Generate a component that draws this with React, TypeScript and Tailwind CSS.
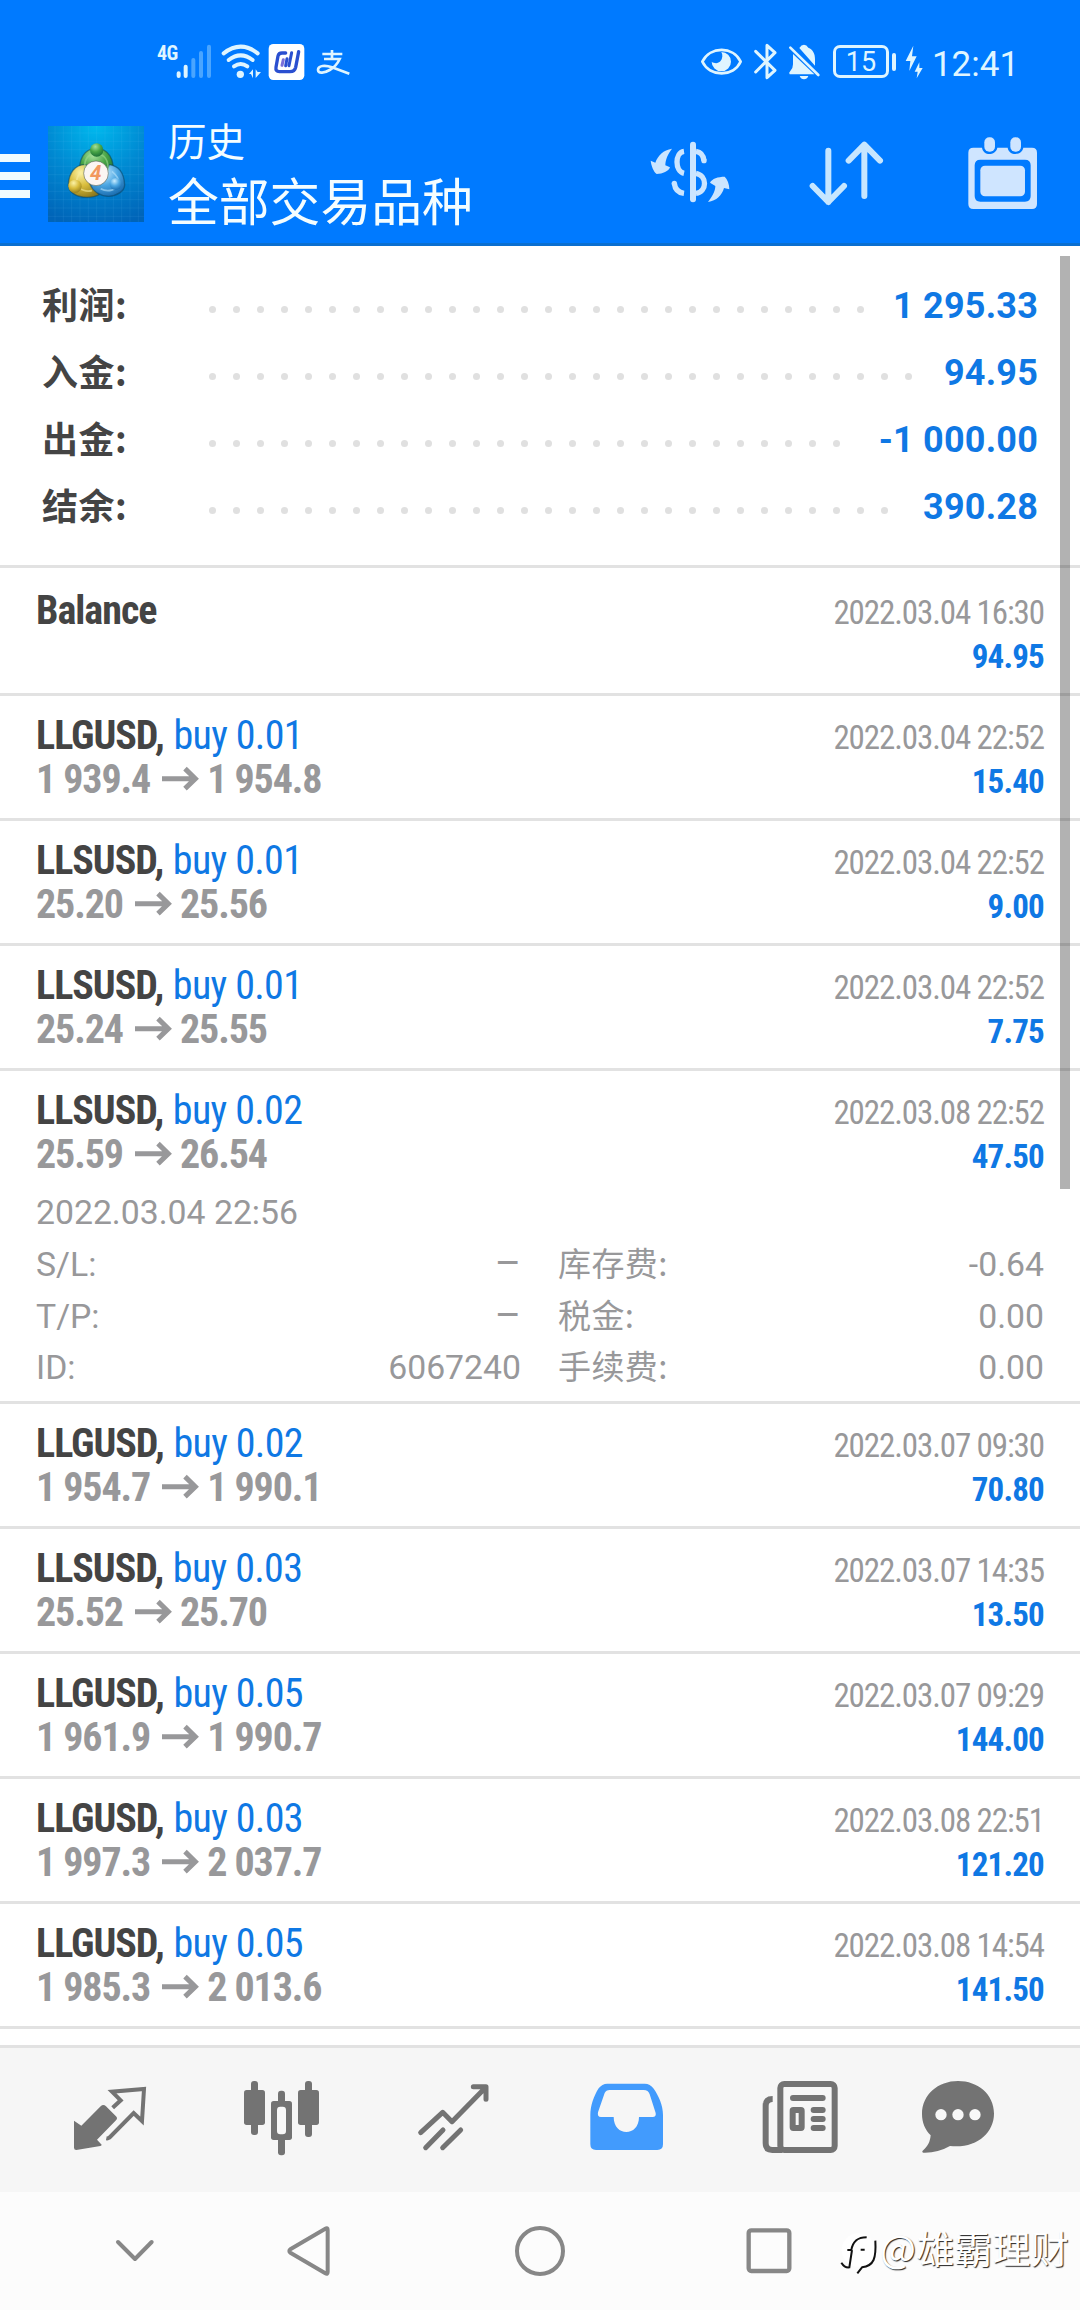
import React from 'react';

type IconProps = { box: string; children: React.ReactNode; className?: string };

// Icons are drawn on a grid of three units per pixel.
function Icon({ box, children, className = '' }: IconProps) {
  const [, , w, h] = box.split(' ').map(Number);
  return (
    <svg
      viewBox={box}
      width={w / 3}
      height={h / 3}
      fill="none"
      className={'shrink-0 overflow-visible ' + className}
    >
      {children}
    </svg>
  );
}

const round = { strokeLinecap: 'round', strokeLinejoin: 'round' } as const;

function StatusBar() {
  return (
    <div className="flex h-[110px] items-start pt-[30px] text-[#dff5ff]">
      <div className="mt-[14px] ml-[157px] w-[19px] text-[20px] leading-[18px] font-bold tracking-[-0.5px] [font-stretch:75%]">4G</div>
      <Icon box="135 0 111 180" className="-ml-px">
        <g {...round} strokeWidth="12">
          <path d="M146 130v8M167 110v28" stroke="#dff5ff" />
          <path d="M190 90v48M213 69v69M237 50v88" stroke="#4aa5ff" />
        </g>
      </Icon>
      <Icon box="264 0 140 180" className="ml-[6px]">
        <g stroke="#dff5ff" strokeWidth="12" strokeLinecap="round">
          <path d="M281 70Q332 30 383 70" />
          <path d="M296 90Q332 62 368 90" />
          <path d="M312 109Q332 95 352 109" />
        </g>
        <circle cx="331" cy="133" r="11" fill="#dff5ff" />
        <path d="M369 118l-12 14h6l6 13zM377 118v26l16-18h-10z" fill="#dff5ff" />
      </Icon>
      <Icon box="410 0 115 180" className="ml-[2px]">
        <rect x="415" y="42" width="107" height="108" rx="14" fill="#fff" />
        <g stroke="#2a4fd0" {...round}>
          <path d="M466 69h-11q-10 0-12 9l-6 34q-2 13 10 13h32q14 0 17-13l9-47" strokeWidth="10" />
          <path d="M459 89l-4 17" strokeWidth="9" stroke="#7a6fd8" />
          <path d="M484 68l-8 39M470 86l-4 21" strokeWidth="9" />
        </g>
      </Icon>
      <Icon box="550 0 115 180" className="ml-[9px]">
        <g stroke="#dff5ff" strokeWidth="8">
          <path d="M575 72h60M604 60v24M580 87h47q-10 22-30 33c-15 9-34 12-35 0c0-14 22-15 42-8l52 19" />
        </g>
      </Icon>

      <Icon box="60 0 130 180" className="ml-[348px]">
        <path d="M67 95C90 48 160 48 182 95C160 142 90 142 67 95z" stroke="#dff5ff" strokeWidth="8" strokeLinejoin="round" />
        <path d="M124 66a29 29 0 1 1-29 29c8 6 20 6 26-1 7-8 8-19 3-28z" fill="#dff5ff" />
      </Icon>
      <Icon box="215 0 80 180" className="ml-[8px]">
        <path d="M226 64l58 57-24 22V46l24 22-58 58" stroke="#dff5ff" strokeWidth="9" {...round} />
      </Icon>
      <Icon box="320 0 110 180" className="ml-[8px]">
        <path d="M360 54q6-10 14-10t13 9c14 6 20 18 20 34v20zM341 72l64 61H331q-4-4 2-10 8-7 8-20z" fill="#dff5ff" />
        <path d="M361 138h26q-4 10-13 10t-13-10z" fill="#dff5ff" />
        <path d="M333 53l84 82" stroke="#dff5ff" strokeWidth="8" strokeLinecap="round" />
      </Icon>
      <div className="mt-[15px] ml-[10px] flex h-[33px] w-[56px] items-center justify-center rounded-[7px] border-[3px] border-[#dff5ff] text-[27px] leading-[30px]">
        15
      </div>
      <div className="mt-[23px] ml-[3px] h-[18px] w-[4px] rounded-full bg-[#dff5ff]" />
      <Icon box="670 0 60 180" className="ml-[8px]">
        <path d="M698 47l-23 46h14l-3 30 22-44h-14zM716 97l-14 28h9l-3 20 18-31h-10z" fill="#dff5ff" />
      </Icon>
      <div className="mt-[15px] ml-[8px] text-[35px] leading-[40px]">12:41</div>
    </div>
  );
}

function Logo() {
  const grid = [165, 190, 215, 240, 265, 290, 315, 340, 365, 390, 415];
  return (
    <Icon box="144 48 288 288" className="mt-[16px] ml-[18px]">
      <defs>
        <radialGradient id="sky" cx=".5" cy="0" r="1.05">
          <stop offset="0" stopColor="#00b9ee" />
          <stop offset=".5" stopColor="#0089d2" />
          <stop offset="1" stopColor="#0064b8" />
        </radialGradient>
        <radialGradient id="green" cx=".4" cy=".25" r=".8">
          <stop offset="0" stopColor="#a6e09a" />
          <stop offset=".5" stopColor="#48a446" />
          <stop offset="1" stopColor="#176a35" />
        </radialGradient>
        <radialGradient id="gold" cx=".4" cy=".25" r=".8">
          <stop offset="0" stopColor="#fbf2a6" />
          <stop offset=".5" stopColor="#d9bd3c" />
          <stop offset="1" stopColor="#8f7a1c" />
        </radialGradient>
        <radialGradient id="azure" cx=".4" cy=".25" r=".8">
          <stop offset="0" stopColor="#c8ecff" />
          <stop offset=".5" stopColor="#4ba6e2" />
          <stop offset="1" stopColor="#1668ac" />
        </radialGradient>
      </defs>
      <rect x="144" y="48" width="288" height="288" fill="url(#sky)" />
      {grid.map((g) => (
        <path key={g} d={`M${g} 48V336M144 ${g - 96}H432`} stroke="#7fd4ff" strokeOpacity=".14" strokeWidth="2" />
      ))}
      <g stroke="#083f5c" strokeOpacity=".5" strokeWidth="4">
        <path d="M239 192c-4-46 14-76 50-77 36 1 56 32 50 80l-26 8-50 0z" fill="url(#green)" />
        <path d="M258 164c-32-2-52 24-53 62 2 22 26 36 56 36 14 0 26-2 36-8l-26-44z" fill="url(#gold)" />
        <path d="M328 164c30 4 44 28 46 60 0 20-24 34-48 35-28-1-48-16-56-36l40-18z" fill="url(#azure)" />
      </g>
      <g strokeWidth="5" strokeOpacity=".6">
        <path d="M254 178c-2-30 10-46 34-48 26 2 38 22 36 52" stroke="#9bd98f" />
        <path d="M246 182c-12 12-18 26-16 40 10 20 30 24 46 20" stroke="#f6eb9c" />
        <path d="M336 184c14 12 22 26 22 38-8 18-34 26-56 14" stroke="#b6e2fb" />
      </g>
      <circle cx="290" cy="120" r="20" fill="url(#green)" />
      <circle cx="225" cy="229" r="20" fill="url(#gold)" />
      <circle cx="347" cy="222" r="18" fill="url(#azure)" />
      <circle cx="288" cy="190" r="37" fill="#fbf6f3" stroke="#3b4a3a" strokeOpacity=".5" strokeWidth="3" />
      <text x="287" y="211" textAnchor="middle" fontFamily="Roboto, sans-serif" fontStyle="italic" fontWeight="700" fontSize="62" fill="#f2985e">
        4
      </text>
    </Icon>
  );
}

function Header() {
  return (
    <header className="h-[246px] border-b-[3px] border-[#0b6fd0] bg-[#007aff]">
      <StatusBar />
      <div className="flex h-[133px] items-start">
        <div className="mt-[44px] flex w-[30px] flex-col gap-[10px]">
          <div className="h-[8px] bg-[#f0fbff]" />
          <div className="h-[8px] bg-[#f0fbff]" />
          <div className="h-[8px] bg-[#f0fbff]" />
        </div>
        <Logo />
        <div className="ml-[24px] w-[441px] pt-[8px] text-[#f4fdff]">
          <div className="text-[38.5px] leading-[50px]">历史</div>
          <div className="mt-[6px] text-[50.8px] leading-[60px]">全部交易品种</div>
        </div>
        <Icon box="60 0 240 399" className="ml-[41px]">
          <g fill="#cbe5ff">
            <rect x="180" y="95" width="18" height="182" rx="9" />
            <path d="M62 152l14 6c8-22 24-38 50-42-12 16-20 32-20 50l14 6c-4 12-22 20-40 20-10-8-16-24-18-40z" />
            <path d="M298 238l-16-4c-6 22-22 38-48 42 12-16 22-32 22-48l-16-10c6-12 24-18 44-18 8 8 14 22 14 38z" />
          </g>
          <g stroke="#cbe5ff" strokeWidth="16">
            <path d="M162 124c-28 4-28 60 0 66M198 124c14 2 22 12 24 28" />
            <path d="M133 220c2 18 14 28 29 30M198 190c34 6 34 56 0 60" />
          </g>
          <circle cx="222" cy="152" r="8" fill="#cbe5ff" />
          <circle cx="133" cy="220" r="8" fill="#cbe5ff" />
        </Icon>
        <Icon box="530 0 240 399" className="ml-[77px]">
          <g stroke="#c6e6ff" strokeWidth="18" {...round}>
            <path d="M594 122v154M547 228l47 48 47-48" />
            <path d="M702 258V104M655 152l47-48 47 48" />
          </g>
        </Icon>
        <Icon box="1000 0 230 399" className="ml-[77px]">
          <path
            fillRule="evenodd"
            d="M1028 113h26c2 12 12 19 22 19s22-7 24-19h31c2 12 12 19 23 19s22-7 24-19h26q15 0 15 15v154q0 15-15 15H1028q-15 0-15-15V128q0-15 15-15zM1049 149q-17 0-17 17v92q0 17 17 17h134q17 0 17-17v-92q0-17-17-17z"
            fill="#cfe5ff"
          />
          <rect x="1049" y="167" width="134" height="92" rx="14" fill="#cfe5ff" />
          <rect x="1061" y="82" width="32" height="43" rx="15" fill="#cfe5ff" />
          <rect x="1139" y="82" width="32" height="43" rx="15" fill="#cfe5ff" />
        </Icon>
      </div>
    </header>
  );
}

const totals = [
  { label: '利润:', value: '1 295.33', dots: 28 },
  { label: '入金:', value: '94.95', dots: 30 },
  { label: '出金:', value: '-1 000.00', dots: 27 },
  { label: '结余:', value: '390.28', dots: 29 },
];

function Summary() {
  return (
    <section className="border-b-[3px] border-[#e2e2e2] pt-[26px] pr-[42px] pb-[25px] pl-[42px]">
      {totals.map((t) => (
        <div key={t.label} className="flex h-[67px] text-[36px] leading-[67px] font-bold">
          <div className="w-[167px] font-['Noto_Sans_CJK_SC',sans-serif] leading-[62px] tracking-[0.5px] text-[#444]">{t.label}</div>
          <div className="flex gap-[17px] pt-[34px]">
            {Array.from({ length: t.dots }, (_, i) => (
              <span key={i} className="size-[7px] rounded-full bg-[#e0e0e0]" />
            ))}
          </div>
          <div className="ml-auto leading-[69px] tracking-[0.2px] whitespace-pre text-[#0f78e4]">{t.value}</div>
        </div>
      ))}
    </section>
  );
}

type Deal = {
  symbol: string;
  side?: string;
  from?: string;
  to?: string;
  time: string;
  profit: string;
  open?: boolean;
};

const deals: Deal[] = [
  { symbol: 'Balance', time: '2022.03.04 16:30', profit: '94.95' },
  { symbol: 'LLGUSD,', side: 'buy 0.01', from: '1 939.4', to: '1 954.8', time: '2022.03.04 22:52', profit: '15.40' },
  { symbol: 'LLSUSD,', side: 'buy 0.01', from: '25.20', to: '25.56', time: '2022.03.04 22:52', profit: '9.00' },
  { symbol: 'LLSUSD,', side: 'buy 0.01', from: '25.24', to: '25.55', time: '2022.03.04 22:52', profit: '7.75' },
  { symbol: 'LLSUSD,', side: 'buy 0.02', from: '25.59', to: '26.54', time: '2022.03.08 22:52', profit: '47.50', open: true },
  { symbol: 'LLGUSD,', side: 'buy 0.02', from: '1 954.7', to: '1 990.1', time: '2022.03.07 09:30', profit: '70.80' },
  { symbol: 'LLSUSD,', side: 'buy 0.03', from: '25.52', to: '25.70', time: '2022.03.07 14:35', profit: '13.50' },
  { symbol: 'LLGUSD,', side: 'buy 0.05', from: '1 961.9', to: '1 990.7', time: '2022.03.07 09:29', profit: '144.00' },
  { symbol: 'LLGUSD,', side: 'buy 0.03', from: '1 997.3', to: '2 037.7', time: '2022.03.08 22:51', profit: '121.20' },
  { symbol: 'LLGUSD,', side: 'buy 0.05', from: '1 985.3', to: '2 013.6', time: '2022.03.08 14:54', profit: '141.50' },
];

const details = [
  ['S/L:', '–', '库存费:', '-0.64'],
  ['T/P:', '–', '税金:', '0.00'],
  ['ID:', '6067240', '手续费:', '0.00'],
];

function DealRow({ deal }: { deal: Deal }) {
  const height = deal.open ? 'h-[116px]' : deal.side ? 'h-[122px]' : 'h-[125px]';
  return (
    <div className="border-b-[3px] border-[#e2e2e2] px-[36px]">
      <div className={'flex justify-between [font-stretch:75%] ' + height + (deal.side ? ' pt-[18px]' : ' pt-[21px]')}>
        <div className="text-[40px] leading-[44px]">
          <div>
            <span className="font-bold tracking-[-1px] text-[#444]">{deal.symbol}</span>
            {deal.side && <span className="ml-px tracking-[-0.65px] text-[#0f78e4]"> {deal.side}</span>}
          </div>
          {deal.from && (
            <div className="flex font-bold tracking-[-1.1px] text-[#98989a]">
              {deal.from}
              <Icon box="0 0 108 132" className="mr-[9px] ml-[12px]">
                <path d="M0 62H98M69 32L100 62L69 92" stroke="currentColor" strokeWidth="15" />
              </Icon>
              {deal.to}
            </div>
          )}
        </div>
        <div className="pt-[2px] text-right text-[33px] leading-[44px]">
          <div className="tracking-[-1.1px] text-[#98989a]">{deal.time}</div>
          <div className="font-bold tracking-[-0.8px] text-[#0f78e4]">{deal.profit}</div>
        </div>
      </div>
      {deal.open && (
        <div className="h-[214px] text-[33.75px] text-[#98989a]">
          <div className="leading-[52px]">2022.03.04 22:56</div>
          {details.map(([a, b, c, d]) => (
            <div key={a} className="flex h-[51.5px] leading-[52px]">
              <div className="flex w-[485px] justify-between">
                <span>{a}</span>
                <span className={b === '–' ? 'text-[40px] leading-[50px]' : ''}>{b}</span>
              </div>
              <div className="ml-[37px] flex flex-1 justify-between">
                <span className="font-['Noto_Sans_CJK_SC',sans-serif] text-[33px] leading-[46px] tracking-[0.4px]">{c}</span>
                <span>{d}</span>
              </div>
            </div>
          ))}
        </div>
      )}
    </div>
  );
}

function TabBar() {
  return (
    <nav className="flex h-[147px] items-center justify-center border-t-[3px] border-[#e2e2e2] bg-[#f6f6f6] text-[#737373]">
      <div className="flex w-[172px] justify-center">
        <Icon box="24 54 252 252">
          <path d="M42 182l22 15 58-58q8-8 16 0l30 30q6 6 0 12l-57 58 14 15q0 3-4 4l-72 12q-7 0-7-7z" fill="currentColor" />
          <path d="M158 143l24-22-26-26 96-8-6 96-25-24-73 74q-4 3-9 2" stroke="currentColor" strokeWidth="12" />
        </Icon>
      </div>
      <div className="flex w-[172px] justify-center">
        <Icon box="540 54 252 252">
          <g fill="currentColor">
            <rect x="552" y="90" width="63" height="105" rx="8" />
            <rect x="573" y="63" width="21" height="162" rx="9" />
            <rect x="714" y="90" width="63" height="105" rx="8" />
            <rect x="735" y="63" width="21" height="168" rx="9" />
            <rect x="633" y="123" width="63" height="117" rx="8" />
            <rect x="654" y="92" width="21" height="194" rx="9" />
          </g>
          <rect x="651" y="140" width="27" height="83" rx="10" fill="#f8f8f8" />
        </Icon>
      </div>
      <div className="flex w-[172px] justify-center">
        <Icon box="1056 54 252 252">
          <g stroke="currentColor" strokeWidth="15" {...round}>
            <path d="M1082 218l66-61 28 28 100-102M1240 80h38v38" />
            <path d="M1097 263l52-53M1148 263l54-53" />
          </g>
        </Icon>
      </div>
      <div className="flex w-[172px] justify-center">
        <Icon box="72 54 252 252">
          <path
            fillRule="evenodd"
            d="M142 71h112q17 0 26 14c16 22 29 52 29 80v88q0 17-17 17H108q-17 0-17-17v-88c0-28 11-58 25-80q10-14 26-14zM149 90q-11 0-15 9l-20 58q-3 14 9 14h38c0 60 76 60 76 0h41q11 0 9-12l-18-56q-4-13-18-13z"
            fill="#429bfd"
          />
        </Icon>
      </div>
      <div className="flex w-[172px] justify-center">
        <Icon box="588 54 252 252">
          <g stroke="currentColor">
            <rect x="661" y="72" width="163" height="198" rx="12" strokeWidth="18" />
            <path d="M638 117q-21 0-21 20v113q0 20 20 20h30" strokeWidth="18" />
            <path d="M699 114h89M761 150h27M761 177h27M761 204h27" strokeWidth="18" strokeLinecap="round" />
            <rect x="698" y="150" width="27" height="54" rx="2" strokeWidth="18" strokeLinejoin="round" />
          </g>
        </Icon>
      </div>
      <div className="flex w-[172px] justify-center">
        <Icon box="1104 54 252 252">
          <path d="M1194 63c60 0 108 40 108 98s-54 106-132 97c-26 14-52 21-80 20q-6-2-2-6c16-13 22-26 24-46-16-16-26-38-26-64 0-58 48-99 108-99z" fill="currentColor" />
          <g fill="#f8f8f8">
            <circle cx="1143" cy="164" r="17" />
            <circle cx="1194" cy="164" r="17" />
            <circle cx="1245" cy="164" r="17" />
          </g>
        </Icon>
      </div>
    </nav>
  );
}

function SystemNav() {
  return (
    <div className="relative flex h-[118px] items-center bg-[#fcfcfc] text-[#878787]">
      <Icon box="165 483 120 180" className="ml-[115px]">
        <path d="M174 546l51 51 50-51" stroke="currentColor" strokeWidth="12" {...round} />
      </Icon>
      <Icon box="675 483 141 180" className="ml-[130px]">
        <path d="M803 510q0-8-7-4L691 568q-6 5 0 10l105 62q7 4 7-4z" stroke="currentColor" strokeWidth="12" strokeLinejoin="round" />
      </Icon>
      <Icon box="1365 483 150 180" className="ml-[183px]">
        <circle cx="1440" cy="573" r="69" stroke="currentColor" strokeWidth="12" />
      </Icon>
      <Icon box="555 483 144 180" className="ml-[180px]">
        <rect x="566" y="511" width="122" height="122" rx="8" stroke="currentColor" strokeWidth="13" />
      </Icon>
      <div className="absolute top-[34px] left-[840px] flex items-start [text-shadow:1px_1px_1px_#222]">
        <Icon box="840 510 129 144" className="mt-[4px]">
          <circle cx="895" cy="570" r="50" fill="#fff" />
          <g stroke="#111" strokeWidth="6">
            <path d="M862 570h12c4-22 14-38 46-38M876 570l-8 52q-14 2-24-14" />
            <path d="M946 542c3 52-4 76-40 80l-14 18M902 569h12" />
          </g>
        </Icon>
        <span className="-ml-[3px] font-['Noto_Sans_CJK_SC',sans-serif] text-[38px] leading-[42px] tracking-[0.2px] whitespace-nowrap text-white">@雄霸理财</span>
      </div>
    </div>
  );
}

export default function App() {
  return (
    <div className="relative flex h-[2310px] w-[1080px] flex-col overflow-hidden bg-white font-[Roboto,'Noto_Sans_CJK_SC',sans-serif]">
      <Header />
      <main className="flex-1">
        <Summary />
        {deals.map((d, i) => (
          <DealRow key={i} deal={d} />
        ))}
      </main>
      <TabBar />
      <SystemNav />
      <div className="absolute top-[256px] right-[10px] h-[933px] w-[10px] bg-black/30" />
    </div>
  );
}
